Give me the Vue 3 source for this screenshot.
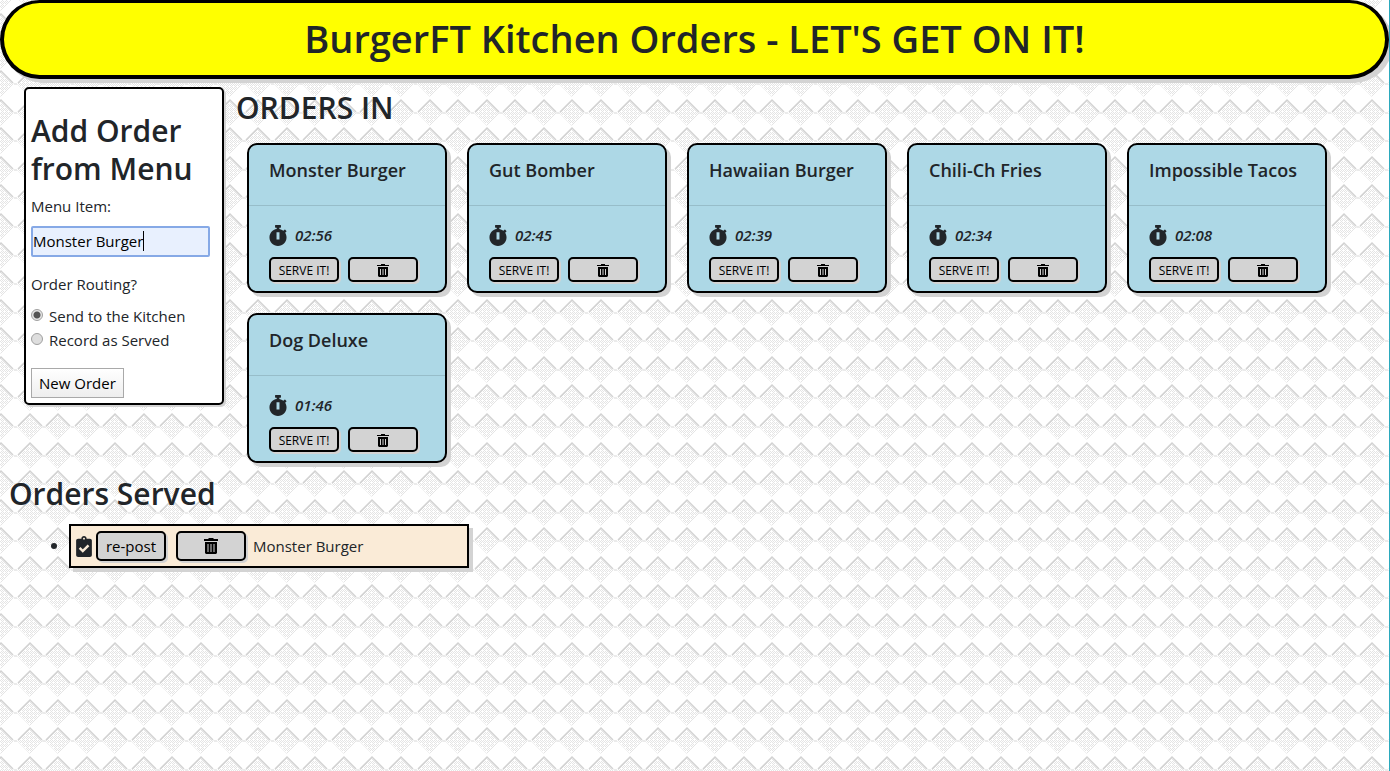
<script setup>
import { ref } from 'vue'

const item = ref('Monster Burger')
const routing = ref('kitchen')
const orders = [
  { name: 'Monster Burger', time: '02:56' },
  { name: 'Gut Bomber', time: '02:45' },
  { name: 'Hawaiian Burger', time: '02:39' },
  { name: 'Chili-Ch Fries', time: '02:34' },
  { name: 'Impossible Tacos', time: '02:08' },
  { name: 'Dog Deluxe', time: '01:46' }
]
const served = [{ name: 'Monster Burger' }]

const step = 200 / 7
const tiles = []
for (let r = -1; r < 8; r++) {
  for (let c = 0; c < 9; c++) {
    tiles.push({ x: Math.round(c * step) + 1, y: Math.round(r * step) + 14 })
  }
}
</script>

<template>
  <div class="page">
    <svg class="backdrop" aria-hidden="true">
      <defs>
        <pattern id="dots" width="4" height="4" patternUnits="userSpaceOnUse">
          <path d="M0 0h1v1H0zM2 0h1v1H2zM1 1h1v1H1zM3 1h1v1H3zM0 2h1v1H0zM2 2h1v1H2zM1 3h1v1H1z" fill="#e4e4e4" />
        </pattern>
        <pattern id="diamonds" width="200" height="200" patternUnits="userSpaceOnUse">
          <g v-for="t in tiles" :key="`${t.x}-${t.y}`" :transform="`translate(${t.x} ${t.y})`">
            <path d="M0 0L13 13L0 26L-13 13Z" fill="url(#dots)" />
            <path d="M-12 12L0 0L12 12" fill="none" stroke="#d2d2d2" stroke-width="1.500" />
            <path d="M-16 13H-13M13 13H16" fill="none" stroke="#e4e4e4" />
          </g>
        </pattern>
      </defs>
      <rect width="100%" height="100%" fill="#fff" />
      <rect width="100%" height="100%" fill="url(#diamonds)" />
    </svg>

    <header class="banner"><h1>BurgerFT Kitchen Orders - LET'S GET ON IT!</h1></header>

    <main class="board">
      <form class="panel" @submit.prevent>
        <h2>Add Order from Menu</h2>
        <label class="caption" for="item">Menu Item:</label>
        <div class="entry">
          <input id="item" v-model="item" class="field" type="text" />
          <span class="caret" aria-hidden="true"></span>
        </div>
        <fieldset class="routing">
          <legend>Order Routing?</legend>
          <label><input v-model="routing" type="radio" name="routing" value="kitchen" />Send to the Kitchen</label>
          <label><input v-model="routing" type="radio" name="routing" value="served" />Record as Served</label>
        </fieldset>
        <button class="submit" type="submit">New Order</button>
      </form>

      <section class="incoming">
        <h2>ORDERS IN</h2>
        <div class="cards">
          <article v-for="o in orders" :key="o.name" class="card">
            <h3>{{ o.name }}</h3>
            <div class="details">
              <p class="timer">
                <svg width="18" height="21" viewBox="8 0 432 512" aria-hidden="true">
                  <path fill="currentColor" fill-rule="evenodd" d="M432 304c0 114.900-93.100 208-208 208S16 418.900 16 304c0-104 76.300-190.200 176-205.500V64h-28c-6.600 0-12-5.400-12-12V12c0-6.600 5.400-12 12-12h120c6.600 0 12 5.400 12 12v40c0 6.600-5.400 12-12 12h-28v34.500c37.500 5.800 71.700 21.600 99.700 44.600l27.500-27.500c4.700-4.700 12.300-4.700 17 0l28.300 28.300c4.700 4.700 4.700 12.300 0 17l-29.400 29.400-.6.600C419.700 223.300 432 262.200 432 304zM188 176V352H260V176z" />
                </svg>
                <em>{{ o.time }}</em>
              </p>
              <div class="actions">
                <button class="btn small" type="button">SERVE IT!</button>
                <button class="btn small" type="button" aria-label="Delete order">
                  <svg width="12" height="13" viewBox="0 0 12 13" aria-hidden="true">
                    <path fill="currentColor" fill-rule="evenodd" d="M4 0h4v1h4v1H0V1h4zM1 3h10v9l-1 1H2l-1-1zM3 5v6h1V5zm2.500 0v6h1V5zM8 5v6h1V5z" />
                  </svg>
                </button>
              </div>
            </div>
          </article>
        </div>
      </section>
    </main>

    <section class="served">
      <h2>Orders Served</h2>
      <ul>
        <li v-for="s in served" :key="s.name">
          <div class="ticket">
            <svg class="check" width="16" height="21" viewBox="0 0 384 512" aria-hidden="true">
              <path fill="currentColor" d="M336 64h-80c0-35.300-28.700-64-64-64s-64 28.700-64 64H48C21.500 64 0 85.500 0 112v352c0 26.500 21.500 48 48 48h288c26.500 0 48-21.500 48-48V112c0-26.500-21.500-48-48-48zM192 40c13.300 0 24 10.700 24 24s-10.700 24-24 24-24-10.700-24-24 10.700-24 24-24z" />
              <path fill="none" stroke="#faebd7" stroke-width="60" d="M85 290l77 76 140-138" />
            </svg>
            <button class="btn" type="button">re-post</button>
            <button class="btn" type="button" aria-label="Delete served order">
              <svg width="14" height="16" viewBox="0 0 14 16" aria-hidden="true">
                <path fill="currentColor" fill-rule="evenodd" d="M5 0h4l1 1h4v2H0V1h4zM1 4h12v11l-1 1H2l-1-1zM3.500 6v8h1V6zm3 0v8h1V6zm3 0v8h1V6z" />
              </svg>
            </button>
            <span>{{ s.name }}</span>
          </div>
        </li>
      </ul>
    </section>
  </div>
</template>

<style>
body {
  margin: 0;
}
</style>

<style scoped>
.page {
  position: relative;
  isolation: isolate;
  box-sizing: border-box;
  min-height: 100vh;
  border-right: 1px solid #2ba9bd;
  overflow: hidden;
  color: #212529;
  font: 400 15px/24px "Open Sans", "Noto Sans", sans-serif;
}
.page *,
.page *::before {
  box-sizing: border-box;
}
.backdrop {
  position: absolute;
  inset: 0;
  z-index: -1;
  width: 100%;
  height: 100%;
}
h1,
h2,
h3,
p,
ul {
  margin: 0;
  padding: 0;
}
h1,
h2,
h3 {
  font-weight: 600;
}
h1 {
  font-size: 38px;
  line-height: 48px;
}
h2 {
  font-size: 30px;
  line-height: 38px;
}
button,
input {
  font: inherit;
}
.banner {
  padding: 11px 20px 13px;
  border: solid #000;
  border-width: 3px 4px 4px;
  border-radius: 40px;
  background: #ff0;
  box-shadow: 4px 4px #d3d3d3;
  text-align: center;
}
.board {
  display: flex;
  align-items: flex-start;
  gap: 12px;
  padding: 8px 24px 0;
}
.panel {
  flex: none;
  width: 200px;
  padding: 23px 5px 5px;
  border: 2px solid #000;
  border-radius: 5px;
  background: #fff;
  box-shadow: 2px 2px #d3d3d3;
}
.caption {
  display: block;
  margin: 6px 0 8px;
}
.entry {
  position: relative;
}
.field {
  display: block;
  width: 179px;
  height: 31px;
  padding: 0 1px 1px 0;
  border: 2px solid #86a9e6;
  border-radius: 2px;
  outline: none;
  background: #e8f0fe;
  color: #000;
}
.caret {
  position: absolute;
  top: 5px;
  left: 112px;
  width: 1px;
  height: 20px;
  background: #000;
}
.routing {
  margin: 15px 0 16px;
  padding: 0;
  border: 0;
}
.routing legend {
  margin-bottom: 8px;
  padding: 0;
}
.routing label {
  display: flex;
  gap: 6px;
}
.routing input {
  appearance: none;
  width: 12px;
  height: 12px;
  margin: 5px 0 0;
  border: 1px solid #a0a0a0;
  border-radius: 50%;
  background: #dedede;
}
.routing input:checked {
  background: radial-gradient(circle, #555 0 3px, #e6e6e6 4px);
}
.submit {
  height: 30px;
  padding: 0 7px;
  border: 1px solid #a9a9a9;
  border-radius: 0;
  background: linear-gradient(#fff, #eee);
  color: #000;
}
.incoming {
  flex: 1;
  padding-top: 2px;
}
.cards {
  display: flex;
  flex-wrap: wrap;
  gap: 20px;
  padding: 16px 11px 0;
}
.card {
  width: 200px;
  height: 150px;
  border: 2px solid #000;
  border-radius: 10px;
  background: #add8e6;
  box-shadow: 4px 4px #d3d3d3;
}
.card h3 {
  height: 61px;
  padding: 13px 0 0 20px;
  border-bottom: 1px solid #97bdc9;
  font-size: 18px;
  line-height: 24px;
  white-space: nowrap;
}
.details {
  padding: 17px 20px 0;
}
.timer {
  display: flex;
  align-items: center;
  gap: 8px;
  font-weight: 600;
}
.actions {
  display: flex;
  gap: 9px;
  padding-top: 10px;
}
.btn {
  display: flex;
  flex: none;
  align-items: center;
  justify-content: center;
  width: 70px;
  height: 30px;
  padding: 0;
  border: 2px solid #000;
  border-radius: 5px;
  background: #d3d3d3;
  box-shadow: 2px 2px #d3d3d3;
  color: #000;
  white-space: nowrap;
}
.small {
  height: 25px;
  padding-top: 2px;
  font-size: 12px;
}
.served {
  padding: 12px 9px;
}
.served ul {
  padding: 11px 0 0 42px;
  list-style: none;
}
.served li {
  display: flex;
  align-items: center;
  gap: 12px;
}
.served li::before {
  width: 6px;
  height: 6px;
  border-radius: 50%;
  background: #212529;
  content: "";
}
.ticket {
  display: flex;
  align-items: center;
  width: 400px;
  height: 44px;
  padding: 0 5px;
  border: 2px solid #000;
  background: #faebd7;
  box-shadow: 4px 4px #d3d3d3;
}
.check {
  margin-right: 4px;
}
.ticket .btn + .btn {
  margin: 0 7px 0 10px;
}
</style>
